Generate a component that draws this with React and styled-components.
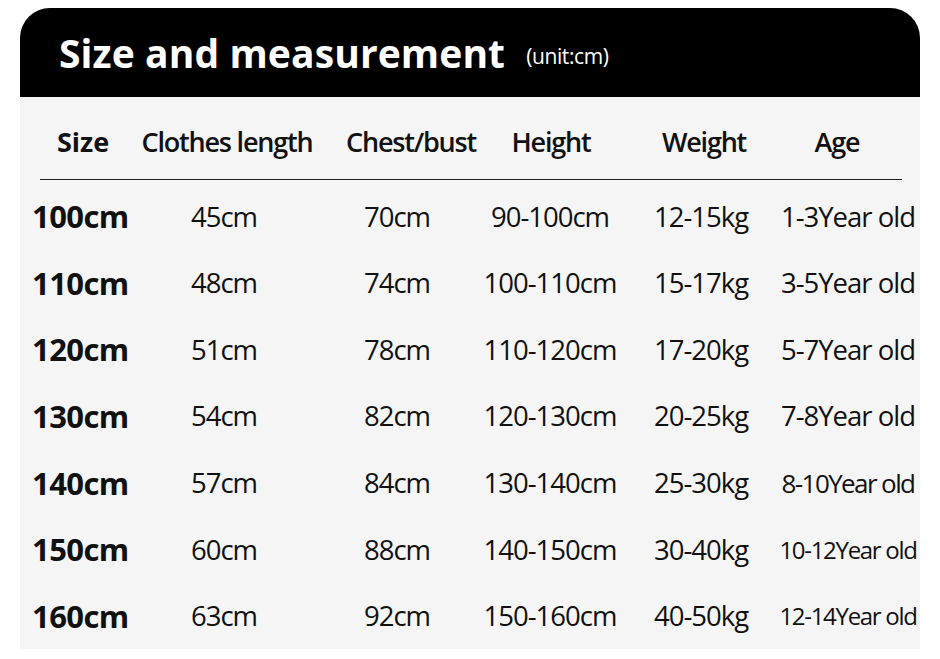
import React from "react";
import styled, { createGlobalStyle } from "styled-components";

const Global = createGlobalStyle`
  html, body { margin: 0; padding: 0; background: #ffffff; }
  body { font-family: "Open Sans", "Noto Sans", sans-serif; color: #111; }
`;

const Page = styled.div`
  width: 940px;
  height: 659px;
  padding: 8px 20px 0 20px;
  box-sizing: border-box;
  overflow: hidden;
`;

const TitleBar = styled.div`
  height: 89px;
  background: #000;
  border-radius: 30px 30px 0 0;
  display: flex;
  align-items: center;
  padding-left: 39px;
  gap: 21px;
  color: #fff;
`;

const Title = styled.h1`
  margin: 0;
  font-size: 39px;
  font-weight: 700;
  letter-spacing: 0.1px;
  line-height: 1;
`;

const Unit = styled.span`
  font-size: 21px;
  font-weight: 400;
  letter-spacing: -0.4px;
  margin-top: 6px;
`;

const Panel = styled.div`
  background: #f5f5f5;
  height: 552px;
  display: flex;
  flex-direction: column;
`;

const Row = styled.div`
  display: grid;
  grid-template-columns: ${(p) => p.$cols};
  height: ${(p) => p.$h}px;
  align-items: center;
`;

const HeadCell = styled.div`
  display: flex;
  justify-content: center;
  white-space: nowrap;
  min-width: 0;
  font-size: 27px;
  font-weight: ${(p) => (p.$strong ? 700 : 600)};
  letter-spacing: ${(p) => (p.$strong ? "0px" : "-1.2px")};
  padding-top: 8px;
`;

const Rule = styled.div`
  height: 1px;
  background: #222;
  margin: 0 18px 0 20px;
`;

const SizeCell = styled.div`
  display: flex;
  justify-content: flex-start;
  padding-left: 12px;
  white-space: nowrap;
  font-size: 31px;
  font-weight: 700;
  letter-spacing: -0.6px;
`;

const Cell = styled.div`
  display: flex;
  justify-content: center;
  white-space: nowrap;
  min-width: 0;
  font-size: ${(p) => (p.$small ? 24 : p.$tight ? 26 : 27.5)}px;
  font-weight: 400;
  letter-spacing: ${(p) => (p.$small ? "-1.3px" : p.$tight ? "-1.6px" : "-1px")};
`;

const Body = styled.div`
  padding-top: 3px;
  display: flex;
  flex-direction: column;
`;

const headCols = "126px 162px 206px 74px 232px 34px";
const dataCols = "120px 168px 178px 128px 174px 120px";

const headers = ["Size", "Clothes length", "Chest/bust", "Height", "Weight", "Age"];

const rows = [
  ["100cm", "45cm", "70cm", "90-100cm", "12-15kg", "1-3Year old"],
  ["110cm", "48cm", "74cm", "100-110cm", "15-17kg", "3-5Year old"],
  ["120cm", "51cm", "78cm", "110-120cm", "17-20kg", "5-7Year old"],
  ["130cm", "54cm", "82cm", "120-130cm", "20-25kg", "7-8Year old"],
  ["140cm", "57cm", "84cm", "130-140cm", "25-30kg", "8-10Year old"],
  ["150cm", "60cm", "88cm", "140-150cm", "30-40kg", "10-12Year old"],
  ["160cm", "63cm", "92cm", "150-160cm", "40-50kg", "12-14Year old"],
];

export default function App() {
  return (
    <>
      <Global />
      <Page>
        <TitleBar>
          <Title>Size and measurement</Title>
          <Unit>(unit:cm)</Unit>
        </TitleBar>
        <Panel>
          <Row $cols={headCols} $h={85}>
            {headers.map((h, i) => (
              <HeadCell key={h} $strong={i === 0}>
                {h}
              </HeadCell>
            ))}
          </Row>
          <Rule />
          <Body>
            {rows.map((r) => (
              <Row key={r[0]} $cols={dataCols} $h={66.6}>
                <SizeCell>{r[0]}</SizeCell>
                {r.slice(1).map((v, i) => (
                  <Cell
                    key={i}
                    $small={i === 4 && v.length > 12}
                    $tight={i === 4 && v.length === 12}
                  >
                    {v}
                  </Cell>
                ))}
              </Row>
            ))}
          </Body>
        </Panel>
      </Page>
    </>
  );
}
